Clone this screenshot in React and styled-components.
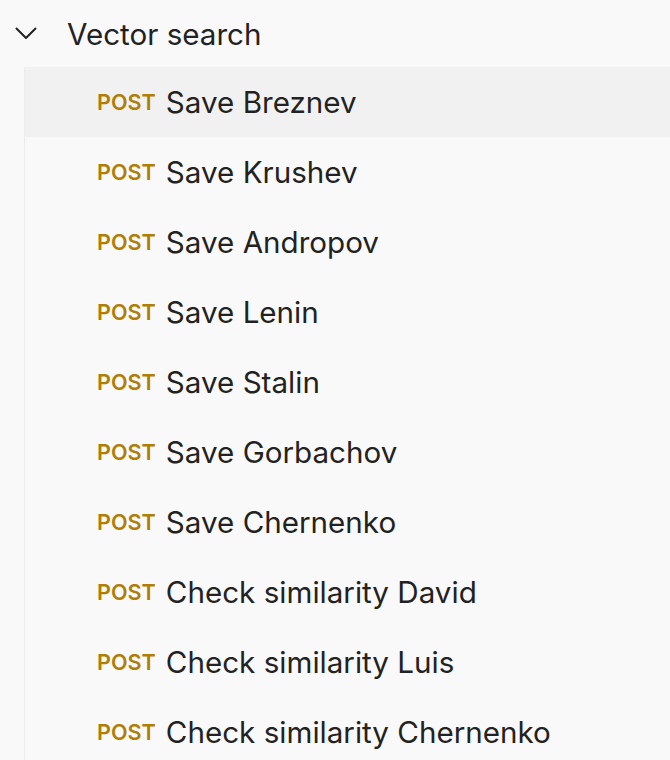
import React from 'react'
import styled, { createGlobalStyle } from 'styled-components'

const GlobalStyle = createGlobalStyle`
  html, body {
    margin: 0;
    padding: 0;
    background-color: #f9f9f9;
  }
  body {
    font-family: Inter, "Noto Sans", sans-serif;
  }
`;

const Folder = styled.div`
  width: 670px;
  height: 760px;
  overflow: hidden;
  background-color: #f9f9f9;
`;

const FolderHead = styled.div`
  height: 67px;
  display: flex;
  align-items: center;
  padding-left: 15px;
  gap: 30px;
  color: #222;
`;

const FolderName = styled.span`
  font-size: 29.6px;
  font-weight: 400;
`;

const Children = styled.div`
  margin-left: 24px;
  border-left: 1px solid #ececec;
`;

const Request = styled.div`
  height: 70px;
  display: flex;
  align-items: center;
  padding-left: 72px;
  gap: 10px;
  background-color: ${props => (props.active ? '#f1f1f1' : 'transparent')};
`;

const Method = styled.span`
  font-size: 21.6px;
  font-weight: 600;
  color: #b07e06;
`;

const RequestName = styled.span`
  font-size: 29.6px;
  font-weight: 400;
  color: #222;
`;

const requests = [
  'Save Breznev',
  'Save Krushev',
  'Save Andropov',
  'Save Lenin',
  'Save Stalin',
  'Save Gorbachov',
  'Save Chernenko',
  'Check similarity David',
  'Check similarity Luis',
  'Check similarity Chernenko',
];

export default function App() {
  return (
    <>
      <GlobalStyle />
      <Folder>
        <FolderHead>
          <svg width="22" height="13" viewBox="0 0 22 13" fill="none" stroke="#222" strokeWidth="2" strokeLinecap="round" strokeLinejoin="round">
            <path d="M1.5 1.5l9.5 9.5 9.5-9.5" />
          </svg>
          <FolderName>Vector search</FolderName>
        </FolderHead>
        <Children>
          {requests.map((name, i) => (
            <Request key={name} active={i === 0}>
              <Method>POST</Method>
              <RequestName>{name}</RequestName>
            </Request>
          ))}
        </Children>
      </Folder>
    </>
  )
}
